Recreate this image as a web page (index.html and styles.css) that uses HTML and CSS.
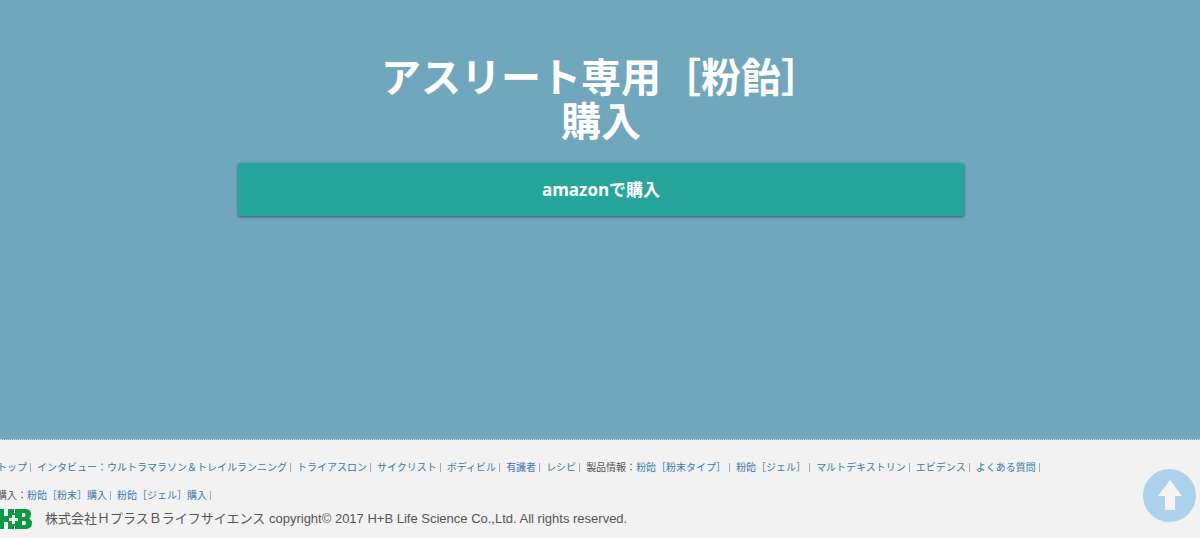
FILE: index.html
```html
<!DOCTYPE html>
<html lang="ja">
<head>
<meta charset="utf-8">
<meta name="viewport" content="width=device-width, initial-scale=1">
<title>アスリート専用［粉飴］購入</title>
<link rel="stylesheet" href="styles.css">
</head>
<body>
<main class="hero">
  <div class="hero-inner">
    <h1 class="hero-title">アスリート専用［粉飴］<br>購入</h1>
    <a class="buy-button" href="#amazon">amazonで購入</a>
  </div>
</main>
<footer class="footer">
  <nav class="footer-nav">
    <ul class="link-row">
      <li class="item"><a href="#top">トップ</a></li>
      <li class="item">
        <a href="#interview">インタビュー：</a><a href="#trail">ウルトラマラソン＆トレイルランニング</a>
      </li>
      <li class="item"><a href="#triathlon">トライアスロン</a></li>
      <li class="item"><a href="#cyclist">サイクリスト</a></li>
      <li class="item"><a href="#bodybuild">ボディビル</a></li>
      <li class="item"><a href="#expert">有識者</a></li>
      <li class="item"><a href="#recipe">レシピ</a></li>
      <li class="item"><span>製品情報：</span><a href="#powder">粉飴［粉末タイプ］</a></li>
      <li class="item"><a href="#gel">粉飴［ジェル］</a></li>
      <li class="item"><a href="#maltodextrin">マルトデキストリン</a></li>
      <li class="item"><a href="#evidence">エビデンス</a></li>
      <li class="item"><a href="#faq">よくある質問</a></li>
    </ul>
    <ul class="link-row">
      <li class="item"><span>購入：</span><a href="#buy-powder">粉飴［粉末］購入</a></li>
      <li class="item"><a href="#buy-gel">粉飴［ジェル］購入</a></li>
    </ul>
  </nav>
  <div class="company">
    <svg class="logo" viewBox="0 0 35 20" role="img" aria-label="H+B">
      <path fill="#0b9a44" d="M0 0h7v7h4V0h17q6 0 6 5 0 3-2 4.500 3 1.500 3 4.500 0 6-7 6H18v-3h-1v3h-6v-7H7v7H0z"/>
      <path fill="#f2f2f2" d="M15 6h3v3h3v3h-3v3h-3v-3h-3V9h3zM17 0h1v4h-1zM25 4h2q1.500 0 1.500 2T27 8h-2zM25 12h2.500q1.500 0 1.500 2t-1.500 2H25z"/>
    </svg>
    <p class="copyright">株式会社ＨプラスＢライフサイエンス copyright© 2017 H+B Life Science Co.,Ltd. All rights reserved.</p>
  </div>
</footer>
<a class="page-top" href="#top" aria-label="ページの先頭へ">
  <svg viewBox="0 0 53 53" aria-hidden="true"><path fill="#f5f5f5" d="M27 11 39 27H32V41H22V27H15z"/></svg>
</a>
</body>
</html>
```
FILE: styles.css
```css
* {
  box-sizing: border-box;
}

body {
  margin: 0;
  min-height: 100vh;
  display: flex;
  flex-direction: column;
  overflow-x: hidden;
  background: #f2f2f2;
  color: #555;
  font-family: "Liberation Sans", "Noto Sans CJK JP", sans-serif;
}

a {
  color: #3a78ad;
  text-decoration: none;
}

.hero {
  flex: 1;
  padding: 53px 20px 40px 22px;
  background: #71a7bd;
  border-bottom: 1px dotted #c8d8de;
}

.hero-inner {
  max-width: 726px;
  margin: 0 auto;
  text-align: center;
}

.hero-title {
  margin: 0 0 22px;
  color: #fff;
  font-family: "Noto Sans CJK JP", sans-serif;
  font-size: 40px;
  font-weight: 700;
  line-height: 44px;
}

.buy-button {
  display: block;
  padding: 14px;
  border-radius: 2px;
  background: #26a69a;
  box-shadow: 0 1px 3px rgba(0, 0, 0, 0.5);
  color: #fff;
  font-family: "Open Sans", "Noto Sans CJK JP", sans-serif;
  font-size: 17px;
  font-weight: 700;
  line-height: 25px;
}

.footer {
  padding: 13px 0 9px;
  margin-left: -3px;
}

.link-row {
  display: flex;
  flex-wrap: wrap;
  column-gap: 6px;
  margin: 0;
  padding: 0;
  list-style: none;
  font-family: "Noto Sans CJK JP", sans-serif;
  font-size: 10px;
  line-height: 28px;
}

.item {
  display: flex;
  align-items: center;
}

.item::after {
  content: "";
  height: 9px;
  margin-left: 3px;
  border-right: 1px solid #a5adb3;
}

.company {
  display: flex;
  align-items: center;
  gap: 13px;
}

.logo {
  width: 35px;
  height: 20px;
}

.copyright {
  margin: 0;
  font-size: 13px;
  line-height: 20px;
}

.page-top {
  position: fixed;
  right: 4px;
  bottom: 16px;
  width: 53px;
  height: 53px;
  border-radius: 50%;
  background: #abd1ec;
}
```
